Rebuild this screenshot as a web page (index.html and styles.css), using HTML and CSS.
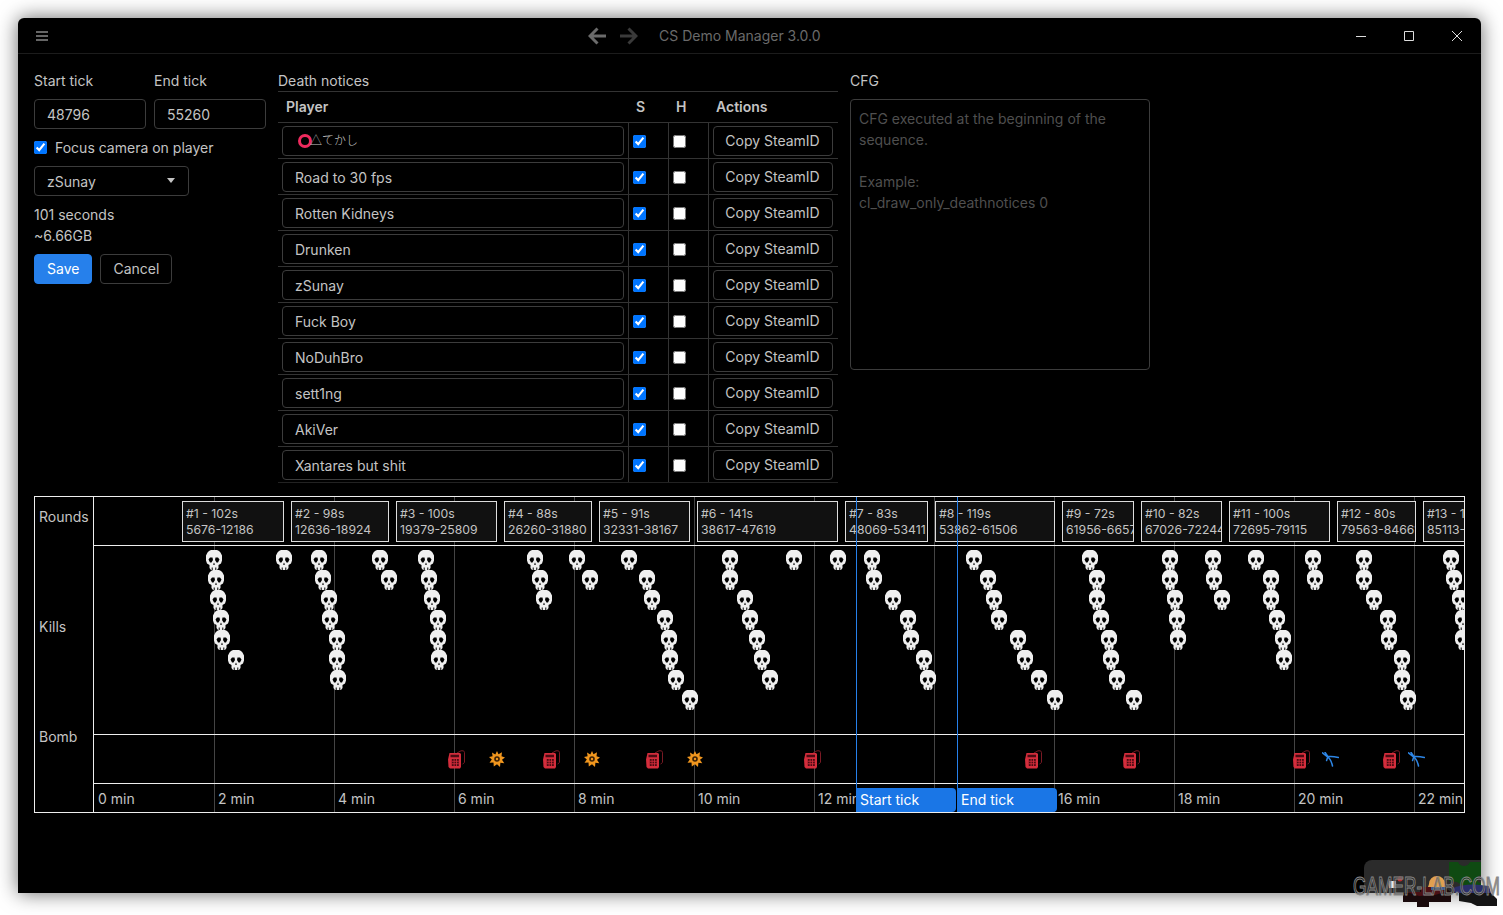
FILE: index.html
```html
<!DOCTYPE html>
<html lang="en">
<head>
  <meta charset="UTF-8" />
  <title>CS Demo Manager 3.0.0</title>
  <link rel="stylesheet" href="styles.css">
</head>
<body>
  <svg class="sprites" width="0" height="0">
    <symbol id="skull" viewBox="0 0 16 20">
      <path fill="#efefef" d="M5 0h6l2 1 1.500 1.500L16 5.500v5l-1 3-2.500 1.500V18l-1.500 2H5l-1.500-2v-3L1 13.500l-1-3v-5l1.500-3L3 1z"/>
      <path fill="#000" d="M2.500 9.500 4 7.500h2.500L7 10l-1.500 2.500H4zM13.500 9.500 12 7.500H9.500L9 10l1.500 2.500H12zM8 12.500l1 2.200H7zM5.700 17.500h1v2.500h-1zM9.300 17.500h1v2.500h-1z"/>
    </symbol>
    <symbol id="plant" viewBox="0 0 17 19">
      <path fill="none" stroke="#7a1a24" d="M9 3 13 .8h2.500l1 1.500v10l-2 2"/>
      <path fill="#d42d3c" d="M1.500 3H12l1 1v13l-1 1.500H2L.500 17 0 9.500z"/>
      <path fill="#4a0b12" d="M2.500 4.800h8.500v2.500H2.500zM3.800 9h7v7h-7z"/>
      <path stroke="#d42d3c" stroke-width=".8" d="M3.800 11.300h7M3.800 13.700h7M6.100 9v7M8.500 9v7"/>
    </symbol>
    <symbol id="explosion" viewBox="0 0 16 16">
      <path fill="#f0961e" d="M8 0l1.500 3.300L13 1.200l-.5 4L16 6.500l-3 2.200 2.300 3.500-3.900-.4L11 16l-3-2.800L4.800 15.500l-.3-4-4 .3 2.300-3.300L0 6l3.600-.8L3 1.500l3.300 2z"/>
      <circle cx="8" cy="8" r="2.800" fill="#3a2005"/>
      <circle cx="8" cy="8" r="1.200" fill="#f0961e"/>
    </symbol>
    <symbol id="defuse" viewBox="0 0 17 15">
      <path fill="none" stroke="#2d86e6" stroke-width="1.500" stroke-linecap="round" d="M.5.800 5.500 4.800Q9 7 10.500 14M3 .3 6 4.600Q10 4 16.500 5.500M5.800 4.700 4.600 8.500"/>
    </symbol>
  </svg>

  <div class="window">
    <div class="titlebar">
      <svg class="menu-icon" width="12" height="10" viewBox="0 0 12 10">
        <path stroke="#666" stroke-width="2" d="M0 1h12M0 5h12M0 9h12"/>
      </svg>
      <div class="nav-group">
        <svg width="18" height="18" viewBox="0 0 18 18">
          <path fill="none" stroke="#6b6b6b" stroke-width="3" d="M18 9H2.500M9.500 1.500 2 9l7.500 7.500"/>
        </svg>
        <svg width="18" height="18" viewBox="0 0 18 18">
          <path fill="none" stroke="#3a3a3a" stroke-width="3" d="M0 9h15.500M8.500 1.500 16 9l-7.500 7.500"/>
        </svg>
        <span class="app-title">CS Demo Manager 3.0.0</span>
      </div>
      <div class="win-buttons">
        <span class="win-btn">
          <svg width="10" height="10" viewBox="0 0 10 10"><path stroke="#ddd" d="M0 5.500h10"/></svg>
        </span>
        <span class="win-btn">
          <svg width="10" height="10" viewBox="0 0 10 10"><path fill="none" stroke="#ddd" d="M.5.500h9v9h-9z"/></svg>
        </span>
        <span class="win-btn">
          <svg width="10" height="10" viewBox="0 0 10 10"><path stroke="#ddd" d="M0 0l10 10M10 0 0 10"/></svg>
        </span>
      </div>
    </div>

    <div class="content">
      <div class="top-row">
        <div class="left-col">
          <div class="tick-fields">
            <label class="field">
              <span class="field-label">Start tick</span>
              <input class="text-input" type="text" value="48796" />
            </label>
            <label class="field">
              <span class="field-label">End tick</span>
              <input class="text-input" type="text" value="55260" />
            </label>
          </div>
          <label class="check-line">
            <input type="checkbox" checked />
            <span>Focus camera on player</span>
          </label>
          <div class="select-box">
            <span>zSunay</span>
            <span class="caret"></span>
          </div>
          <div class="stats">
            <p>101 seconds</p>
            <p>~6.66GB</p>
          </div>
          <div class="form-actions">
            <button class="btn btn-primary">Save</button>
            <button class="btn">Cancel</button>
          </div>
        </div>

        <div class="death-col">
          <div class="section-label">Death notices</div>
          <table class="players">
            <thead>
              <tr>
                <th class="col-player">Player</th>
                <th class="col-check">S</th>
                <th class="col-check">H</th>
                <th class="col-actions">Actions</th>
              </tr>
            </thead>
            <tbody>
              <tr>
                <td><div class="name-box"><span class="ring"></span><span class="cjk">△てかし</span></div></td>
                <td class="cell-check"><input type="checkbox" checked /></td>
                <td class="cell-check"><input type="checkbox" /></td>
                <td class="cell-action"><button class="btn btn-copy">Copy SteamID</button></td>
              </tr>
              <tr>
                <td><div class="name-box">Road to 30 fps</div></td>
                <td class="cell-check"><input type="checkbox" checked /></td>
                <td class="cell-check"><input type="checkbox" /></td>
                <td class="cell-action"><button class="btn btn-copy">Copy SteamID</button></td>
              </tr>
              <tr>
                <td><div class="name-box">Rotten Kidneys</div></td>
                <td class="cell-check"><input type="checkbox" checked /></td>
                <td class="cell-check"><input type="checkbox" /></td>
                <td class="cell-action"><button class="btn btn-copy">Copy SteamID</button></td>
              </tr>
              <tr>
                <td><div class="name-box">Drunken</div></td>
                <td class="cell-check"><input type="checkbox" checked /></td>
                <td class="cell-check"><input type="checkbox" /></td>
                <td class="cell-action"><button class="btn btn-copy">Copy SteamID</button></td>
              </tr>
              <tr>
                <td><div class="name-box">zSunay</div></td>
                <td class="cell-check"><input type="checkbox" checked /></td>
                <td class="cell-check"><input type="checkbox" /></td>
                <td class="cell-action"><button class="btn btn-copy">Copy SteamID</button></td>
              </tr>
              <tr>
                <td><div class="name-box">Fuck Boy</div></td>
                <td class="cell-check"><input type="checkbox" checked /></td>
                <td class="cell-check"><input type="checkbox" /></td>
                <td class="cell-action"><button class="btn btn-copy">Copy SteamID</button></td>
              </tr>
              <tr>
                <td><div class="name-box">NoDuhBro</div></td>
                <td class="cell-check"><input type="checkbox" checked /></td>
                <td class="cell-check"><input type="checkbox" /></td>
                <td class="cell-action"><button class="btn btn-copy">Copy SteamID</button></td>
              </tr>
              <tr>
                <td><div class="name-box">sett1ng</div></td>
                <td class="cell-check"><input type="checkbox" checked /></td>
                <td class="cell-check"><input type="checkbox" /></td>
                <td class="cell-action"><button class="btn btn-copy">Copy SteamID</button></td>
              </tr>
              <tr>
                <td><div class="name-box">AkiVer</div></td>
                <td class="cell-check"><input type="checkbox" checked /></td>
                <td class="cell-check"><input type="checkbox" /></td>
                <td class="cell-action"><button class="btn btn-copy">Copy SteamID</button></td>
              </tr>
              <tr>
                <td><div class="name-box">Xantares but shit</div></td>
                <td class="cell-check"><input type="checkbox" checked /></td>
                <td class="cell-check"><input type="checkbox" /></td>
                <td class="cell-action"><button class="btn btn-copy">Copy SteamID</button></td>
              </tr>
            </tbody>
          </table>
        </div>

        <div class="cfg-col">
          <div class="section-label">CFG</div>
          <textarea class="cfg-text" placeholder="CFG executed at the beginning of the sequence.&#10;&#10;Example:&#10;cl_draw_only_deathnotices 0"></textarea>
        </div>
      </div>

      <div class="timeline">
        <div class="row-labels">
          <span>Rounds</span>
          <span>Kills</span>
          <span>Bomb</span>
        </div>
        <div class="tracks">
          <div class="track track-rounds" id="rounds"></div>
          <div class="track track-kills" id="kills"></div>
          <div class="track track-bomb" id="bomb"></div>
          <div class="track track-axis" id="axis"></div>
          <div id="ticks"></div>
          <div class="marker" id="marker-start"><span class="marker-tag">Start tick</span></div>
          <div class="marker" id="marker-end"><span class="marker-tag">End tick</span></div>
        </div>
      </div>
    </div>

    <div class="toast"></div>
  </div>

  <!-- watermark on top of the screenshot -->
  <div class="watermark">
    <svg class="puzzle" width="150" height="50" viewBox="0 0 150 50">
      <path fill="#0f4a12" d="M96 2h9q2 4 6 4t6-4h11v13q-4 1-4 4t4 4v3h-18l-6-4-8-1z"/>
      <path fill="#2a2f6a" d="M100 28q14-6 36-2l2 7h-36z"/>
      <path fill="#141414" d="M106 33h32l6 6v7h-20l-6-3-12-2z"/>
      <path fill="#1a0a0c" d="M50 33h17v-6h24l7 5v10H76v5H64v-5H50z"/>
      <path fill="#4a1015" d="M54 32h14v-5h20l4 5-10 3-16 1z"/>
      <path fill="#e8e8e8" d="M36 21h7v7h-7z"/>
      <circle cx="47" cy="19" r="2.500" fill="#b83030"/>
      <path fill="#e0a050" d="M76 24a8 8 0 0 1 16 0l1 3H75z"/>
      <path fill="#3a5a90" d="M78 27h14v3H78z"/>
    </svg>
    <span class="wm-text">GAMER-LAB.COM</span>
  </div>

  <script src="timeline.js"></script>
</body>
</html>
```

FILE: styles.css
```css
* {
  margin: 0; padding: 0; box-sizing: border-box; font-family: Inter, "Noto Sans CJK JP", sans-serif;
}
body {
  background-color: #fff;
  padding: 18px;
  height: 100vh;
  overflow: hidden;
  position: relative;
  font-size: 14px;
  color: #c4c4c4;
}
.sprites {
  position: absolute;
}

.window {
  position: relative;
  background-color: #000;
  width: 1463px;
  height: 875px;
  border-radius: 6px 6px 0 0;
  box-shadow: 0 0 20px rgba(0, 0, 0, 0.6);
  overflow: hidden;
}

/* title bar */
.titlebar {
  height: 36px;
  display: flex;
  align-items: center;
  border-bottom: 1px solid #1c1c1c;
  padding-left: 18px;
}
.nav-group {
  display: flex;
  align-items: center;
  gap: 14px;
  margin-left: 540px;
}
.app-title {
  color: #6a6a6a;
  margin-left: 7px;
}
.win-buttons {
  display: flex;
  margin-left: auto;
}
.win-btn {
  width: 48px;
  height: 35px;
  display: flex;
  align-items: center;
  justify-content: center;
}
.win-btn svg {
  display: block;
}

/* top part */
.content {
  padding: 16px 16px 0;
}
.top-row {
  display: flex;
  gap: 12px;
  height: 426px;
}
.left-col {
  width: 232px;
}
.tick-fields {
  display: flex;
  gap: 8px;
}
.field {
  width: 112px;
  display: block;
}
.field-label, .section-label {
  display: block;
  line-height: 21px;
}
.field-label {
  margin-bottom: 8px;
}
.text-input, .select-box, .name-box {
  background-color: #000;
  border: 1px solid #3c3c3c;
  border-radius: 4px;
  color: #c4c4c4;
  font-size: 14px;
  height: 30px;
}
.text-input {
  width: 112px;
  padding: 0 12px;
  outline: none;
  display: block;
}
.check-line {
  display: flex;
  align-items: center;
  gap: 8px;
  margin-top: 8px;
  height: 21px;
}
.check-line input {
  margin: 0;
}
.select-box {
  width: 155px;
  margin-top: 8px;
  padding: 0 12px;
  display: flex;
  align-items: center;
  justify-content: space-between;
}
.caret {
  border-left: 4px solid transparent;
  border-right: 4px solid transparent;
  border-top: 5px solid #c4c4c4;
  margin: 0 1px 2px 0;
}
.stats {
  margin-top: 8px;
  line-height: 21px;
}
.form-actions {
  display: flex;
  gap: 8px;
  margin-top: 8px;
}
.btn {
  background-color: #000;
  color: #c4c4c4;
  border: 1px solid #3c3c3c;
  border-radius: 4px;
  font-size: 14px;
  height: 30px;
  padding: 0 12px 1px;
  cursor: pointer;
}
.btn-primary {
  background-color: #2680eb;
  border-color: #2680eb;
  color: #fff;
}

/* death notices table */
.death-col {
  width: 560px;
}
.players {
  border-collapse: collapse;
  table-layout: fixed;
  width: 560px;
  border-top: 1px solid #333;
}
.players th {
  height: 31px;
  font-weight: 600;
  border-bottom: 1px solid #333;
  text-align: left;
  padding: 0 0 2px 8px;
  vertical-align: middle;
}
.players th.col-player {
  width: 350px;
}
.players th.col-check {
  width: 40px;
}
.players td {
  height: 36px;
  border-bottom: 1px solid #333;
  padding: 0 4px;
  vertical-align: middle;
}
.players tbody tr:last-child td {
  border-bottom: 1px solid #222;
}
.cell-check, .cell-action {
  border-left: 1px solid #333;
  text-align: center;
}
.cell-check input {
  display: block;
  margin: 1px 0 0;
}
.name-box {
  display: flex;
  align-items: center;
  width: 342px;
  padding: 1px 12px 0;
  height: 30px;
}
.ring {
  flex: none;
  width: 14px;
  height: 14px;
  border: 3px solid #ee2a5d;
  border-radius: 50%;
  margin: -1px -2px 0 3px;
}
.cjk {
  font-family: "Noto Sans CJK JP", sans-serif;
  font-size: 12px;
  font-weight: 300;
  margin-top: -3px;
}
.btn-copy {
  width: 120px;
  padding: 0;
  display: block;
}

/* cfg */
.cfg-col {
  width: 300px;
}
.cfg-text {
  display: block;
  margin-top: 8px;
  width: 300px;
  height: 271px;
  background-color: #000;
  border: 1px solid #3c3c3c;
  border-radius: 4px;
  padding: 8px;
  font-size: 14px;
  line-height: 21px;
  color: #c4c4c4;
  resize: none;
  outline: none;
}
.cfg-text::placeholder {
  color: #4f4f4f;
  opacity: 1;
}

/* timeline */
.timeline {
  display: flex;
  width: 1431px;
  height: 317px;
  border: 1px solid #eee;
}
.row-labels {
  width: 59px;
  flex: none;
  border-right: 1px solid #eee;
  display: flex;
  flex-direction: column;
  gap: 89px;
  padding: 9px 0 0 4px;
  line-height: 21px;
}
.tracks {
  position: relative;
  flex: 1;
  overflow: hidden;
}
.track {
  position: relative;
  border-bottom: 1px solid #eee;
  z-index: 1;
}
.track-rounds { height: 49px; }
.track-kills { height: 189px; }
.track-bomb { height: 49px; }
.track-axis { height: 28px; border-bottom: none; }

.tick-line {
  position: absolute;
  top: 0;
  bottom: 0;
  width: 1px;
  background-color: #444;
}
.round {
  position: absolute;
  top: 4px;
  height: 41px;
  background-color: #111;
  border: 1px solid #ddd;
  padding: 4px 0 0 3px;
  font-size: 12.250px;
  line-height: 16px;
  white-space: nowrap;
  overflow: hidden;
}
.skull, .bomb-icon {
  position: absolute;
  display: block;
}
.axis-label {
  position: absolute;
  top: 4px;
  line-height: 21px;
  white-space: nowrap;
}
.marker {
  position: absolute;
  top: 0;
  bottom: 0;
  width: 1px;
  background-color: #2680eb;
  z-index: 2;
}
.marker-tag {
  position: absolute;
  left: 0;
  bottom: 0;
  width: 100px;
  height: 24px;
  line-height: 24px;
  padding-left: 4px;
  background-color: #1a76e6;
  color: #fff;
  border-radius: 0 4px 4px 0;
  white-space: nowrap;
}

/* windows toast behind the watermark */
.toast {
  position: absolute;
  right: 0;
  bottom: 0;
  width: 117px;
  height: 33px;
  background-color: #2b2b2b;
  border-radius: 8px 0 0 0;
}
.watermark {
  position: absolute;
  left: 1353px;
  top: 860px;
  width: 150px;
  height: 50px;
  pointer-events: none;
}
.puzzle {
  position: absolute;
  left: 0;
  top: 0;
}
.wm-text {
  position: absolute;
  left: 0;
  top: 11px;
  font-family: "Liberation Sans", sans-serif;
  font-size: 26px;
  line-height: 30px;
  color: rgba(40, 40, 40, 0.55);
  -webkit-text-stroke: 1px #8a8a8a;
  white-space: nowrap;
  transform: scaleX(0.665);
  transform-origin: left top;
}
```

FILE: timeline.js
```js
// all x values are page pixels, the track starts at x=94
const TRACK_LEFT = 94;
const KILLS_TOP = 546;

const rounds = [
  ['#1 - 102s', '5676-12186', 182, 284],
  ['#2 - 98s', '12636-18924', 291, 389],
  ['#3 - 100s', '19379-25809', 396, 497],
  ['#4 - 88s', '26260-31880', 504, 592],
  ['#5 - 91s', '32331-38167', 599, 690],
  ['#6 - 141s', '38617-47619', 697, 838],
  ['#7 - 83s', '48069-53411', 845, 928],
  ['#8 - 119s', '53862-61506', 935, 1055],
  ['#9 - 72s', '61956-66572', 1062, 1134],
  ['#10 - 82s', '67026-72244', 1141, 1222],
  ['#11 - 100s', '72695-79115', 1229, 1330],
  ['#12 - 80s', '79563-84661', 1337, 1416],
  ['#13 - 102s', '85113-91550', 1423, 1530],
];

// one list per burst of kills, rows go down 20px from y=560
const killGroups = [
  [214, 216, 218, 221, 222, 236], [284],
  [319, 323, 329, 330, 337, 337, 338],
  [380, 389],
  [426, 429, 432, 438, 438, 439],
  [535, 540, 544], [577, 590],
  [629, 647, 652, 665, 669, 670, 676, 690],
  [730, 730, 745, 750, 757, 762, 770],
  [794], [838],
  [872, 874, 893, 908, 911, 924, 928],
  [974, 988, 994, 999, 1018, 1025, 1039, 1055],
  [1090, 1097, 1097, 1101, 1109, 1111, 1117, 1134],
  [1170, 1170, 1175, 1177, 1178],
  [1213, 1214, 1222],
  [1256, 1271, 1271, 1277, 1283, 1284],
  [1313, 1315],
  [1364, 1364, 1374, 1388, 1389, 1402, 1402, 1408],
  [1451, 1454, 1460, 1463, 1463],
];

const bombEvents = [
  ['plant', 457], ['explosion', 497], ['plant', 552], ['explosion', 592],
  ['plant', 655], ['explosion', 695], ['plant', 813], ['plant', 1034],
  ['plant', 1132], ['plant', 1302], ['defuse', 1331], ['plant', 1392], ['defuse', 1417],
];

const iconSizes = {
  plant: [17, 19],
  explosion: [16, 16],
  defuse: [17, 15],
};

function useIcon(id, cls, x, y, w, h) {
  const svg = document.createElementNS('http://www.w3.org/2000/svg', 'svg');
  const use = document.createElementNS('http://www.w3.org/2000/svg', 'use');
  use.setAttribute('href', '#' + id);
  svg.appendChild(use);
  svg.setAttribute('class', cls);
  svg.setAttribute('width', w);
  svg.setAttribute('height', h);
  svg.style.left = x + 'px';
  svg.style.top = y + 'px';
  return svg;
}

const roundsEl = document.getElementById('rounds');
rounds.forEach((r) => {
  const box = document.createElement('div');
  box.className = 'round';
  box.style.left = (r[2] - TRACK_LEFT) + 'px';
  box.style.width = (r[3] - r[2]) + 'px';
  box.innerHTML = r[0] + '<br>' + r[1];
  roundsEl.appendChild(box);
});

const killsEl = document.getElementById('kills');
killGroups.forEach((group) => {
  group.forEach((x, i) => {
    killsEl.appendChild(useIcon('skull', 'skull', x - 8 - TRACK_LEFT, 550 + i * 20 - KILLS_TOP, 16, 20));
  });
});

const bombEl = document.getElementById('bomb');
bombEvents.forEach((e) => {
  const size = iconSizes[e[0]];
  bombEl.appendChild(useIcon(e[0], 'bomb-icon', e[1] - Math.round(size[0] / 2) - TRACK_LEFT, 24 - size[1] / 2, size[0], size[1]));
});

const axisEl = document.getElementById('axis');
const ticksEl = document.getElementById('ticks');
for (let i = 0; i <= 11; i++) {
  const x = 120 * i;
  if (i > 0) {
    const line = document.createElement('div');
    line.className = 'tick-line';
    line.style.left = x + 'px';
    ticksEl.appendChild(line);
  }
  // 14 min sits right under the end tick tag
  if (i === 7) continue;
  const label = document.createElement('span');
  label.className = 'axis-label';
  label.style.left = (x + 4) + 'px';
  label.textContent = (i * 2) + ' min';
  axisEl.appendChild(label);
}

document.getElementById('marker-start').style.left = (856 - TRACK_LEFT) + 'px';
document.getElementById('marker-end').style.left = (957 - TRACK_LEFT) + 'px';
```
